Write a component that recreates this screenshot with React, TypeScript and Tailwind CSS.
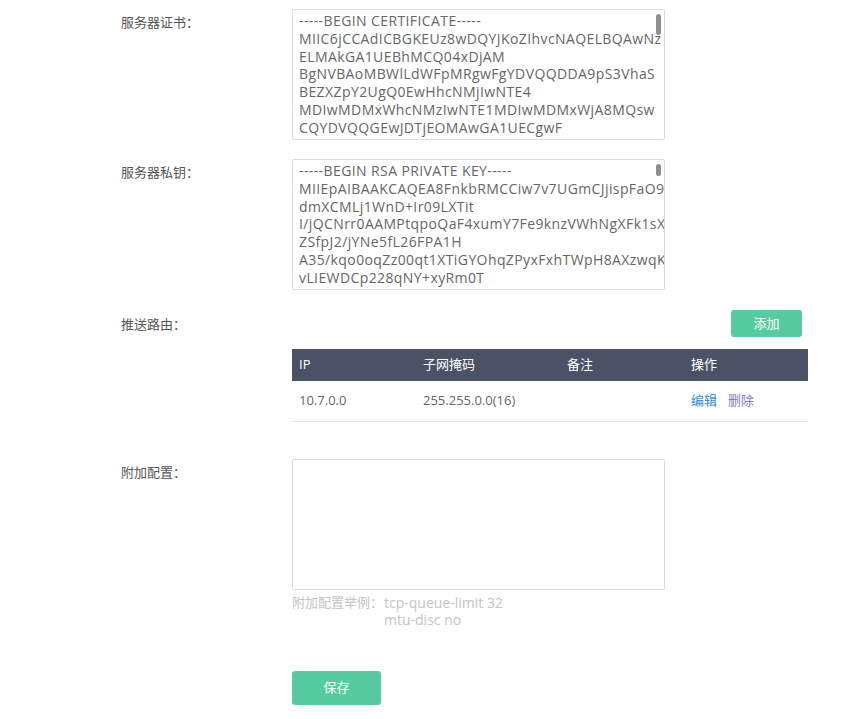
const CERT_LINES = [
  '-----BEGIN CERTIFICATE-----',
  'MIIC6jCCAdICBGKEUz8wDQYJKoZIhvcNAQELBQAwNz',
  'ELMAkGA1UEBhMCQ04xDjAM',
  'BgNVBAoMBWlLdWFpMRgwFgYDVQQDDA9pS3VhaS',
  'BEZXZpY2UgQ0EwHhcNMjIwNTE4',
  'MDIwMDMxWhcNMzIwNTE1MDIwMDMxWjA8MQsw',
  'CQYDVQQGEwJDTjEOMAwGA1UECgwF',
  'dUt1YWkxHTAbBgNVBAMMFGlLdWFpIFNlcnZl',
];

const KEY_LINES = [
  '-----BEGIN RSA PRIVATE KEY-----',
  'MIIEpAIBAAKCAQEA8FnkbRMCCiw7v7UGmCJjispFaO9',
  'dmXCMLj1WnD+Ir09LXTit',
  'I/jQCNrr0AAMPtqpoQaF4xumY7Fe9knzVWhNgXFk1sX',
  'ZSfpJ2/jYNe5fL26FPA1H',
  'A35/kqo0oqZz00qt1XTiGYOhqZPyxFxhTWpH8AXzwqK',
  'vLIEWDCp228qNY+xyRm0T',
  'Un6ZvNam3cRGlkVbvRREPEz2CzeOUQ5uOMFz',
];

const ROUTES = [{ ip: '10.7.0.0', mask: '255.255.0.0(16)', note: '' }];

const FONT = "font-['Open_Sans','Noto_Sans_CJK_SC',sans-serif]";

export default function App() {
  return (
    <div className={`${FONT} min-h-[719px] bg-white pl-[121px] pt-[9px] text-[13px] text-[#555]`}>
      {/* 证书 */}
      <FormRow label="服务器证书：">
        <CodeBox lines={CERT_LINES} thumb="h-[21px]" />
      </FormRow>

      <div className="mt-[19px]">
        <FormRow label="服务器私钥：">
          <CodeBox lines={KEY_LINES} thumb="h-[12px]" />
        </FormRow>
      </div>

      {/* 路由 */}
      <div className="mt-[20px] flex items-center">
        <div className="w-[171px] leading-[20px]">推送路由：</div>
        <div className="flex w-[510px] justify-end">
          <button className="h-[27px] w-[71px] rounded-[3px] bg-[#56cb9f] text-[13px] text-white">添加</button>
        </div>
      </div>

      <div className="ml-[171px] mt-[12px] w-[516px]">
        <div className="grid h-[32px] grid-cols-[124px_144px_124px_124px] items-center bg-[#4b5266] text-white">
          <div className="pl-[7px]">IP</div>
          <div className="pl-[7px]">子网掩码</div>
          <div className="pl-[7px]">备注</div>
          <div className="pl-[7px]">操作</div>
        </div>
        {ROUTES.map((r) => (
          <div
            key={r.ip}
            className="grid h-[41px] grid-cols-[124px_144px_124px_124px] items-center border-b border-[#e2e2e2] text-[#666]"
          >
            <div className="pl-[7px]">{r.ip}</div>
            <div className="pl-[7px]">{r.mask}</div>
            <div className="pl-[7px]">{r.note}</div>
            <div className="flex gap-[11px] pl-[7px]">
              <span className="text-[#2d8bd5]">编辑</span>
              <span className="text-[#8479d0]">删除</span>
            </div>
          </div>
        ))}
      </div>

      {/* 附加配置 */}
      <div className="mt-[37px]">
        <FormRow label="附加配置：">
          <div className="h-[131px] w-[373px] rounded-[2px] border border-[#dcdcdc]" />
        </FormRow>
      </div>
      <div className="ml-[171px] mt-[4px] flex leading-[17px] text-[#c4c4c4]">
        <span className="w-[92px]">附加配置举例：</span>
        <div className="text-[14px]">
          <div>tcp-queue-limit 32</div>
          <div>mtu-disc no</div>
        </div>
      </div>

      <div className="ml-[171px] mt-[43px]">
        <button className="h-[34px] w-[89px] rounded-[3px] bg-[#56cb9f] text-[13px] text-white">保存</button>
      </div>
    </div>
  );
}

function FormRow({ label, children }: { label: string; children: React.ReactNode }) {
  return (
    <div className="flex">
      <div className="w-[171px] pt-[5px] leading-[17px]">{label}</div>
      {children}
    </div>
  );
}

function CodeBox({ lines, thumb }: { lines: string[]; thumb: string }) {
  return (
    <div className="relative h-[131px] w-[373px] overflow-hidden rounded-[2px] border border-[#dcdcdc] bg-white">
      <div className="whitespace-pre px-[6px] pt-[2px] text-[14px] leading-[17.8px] tracking-[0.4px] text-[#666]">
        {lines.map((l) => (
          <div key={l}>{l}</div>
        ))}
      </div>
      <div className={`absolute right-[3px] top-[4px] w-[5px] rounded-full bg-[#8f8f8f] ${thumb}`} />
    </div>
  );
}
